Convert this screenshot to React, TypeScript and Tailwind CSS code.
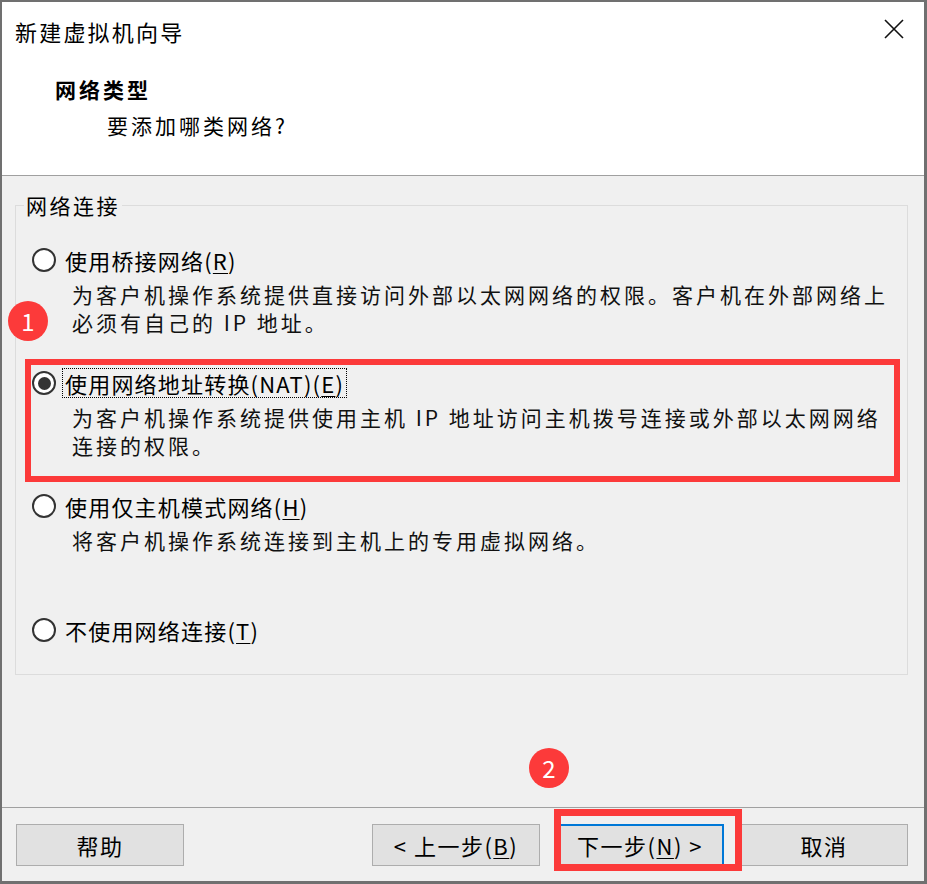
import React from 'react';

const font = { fontFamily: '"Noto Sans CJK SC", "Microsoft YaHei", sans-serif' };

type Opt = {
    label: string;
    key: string;
    desc: string[];
    checked?: boolean;
    focused?: boolean;
    marked?: boolean;
    extra?: string;
};

const Radio: React.FC<{ checked?: boolean }> = ({ checked }) => (
    <span className="w-[24px] h-[24px] rounded-full border-2 border-[#333] bg-white flex items-center justify-center shrink-0">
        {checked && <span className="w-[13px] h-[13px] rounded-full bg-[#333]"></span>}
    </span>
);

const Option: React.FC<{ opt: Opt }> = ({ opt }) => (
    <div
        className={
            'ml-[9px] w-[875px] border-[6px] pt-[3px] pb-[17px] ' +
            (opt.marked ? 'border-[#fc3a3a]' : 'border-transparent') +
            (opt.extra ? ' ' + opt.extra : '')
        }
    >
        <div className="flex items-center h-[30px] pl-[1px]">
            <Radio checked={opt.checked} />
            <span
                className={
                    'ml-[6px] px-[2px] h-[30px] flex items-center text-[22px] tracking-[1.2px] text-black ' +
                    (opt.focused ? 'border border-dotted border-black' : 'border border-transparent')
                }
            >
                {opt.label}(<span className="underline underline-offset-[3px] decoration-1">{opt.key}</span>)
            </span>
        </div>
        {opt.desc.length > 0 && (
            <div className="mt-[5px] pl-[41px] text-[21px] leading-[28px] tracking-[3px] text-[#111]">
                {opt.desc.map((d, i) => (
                    <div key={i}>{d}</div>
                ))}
            </div>
        )}
    </div>
);

const options: Opt[] = [
    {
        label: '使用桥接网络',
        key: 'R',
        desc: ['为客户机操作系统提供直接访问外部以太网网络的权限。客户机在外部网络上', '必须有自己的 IP 地址。'],
        extra: 'pb-[16px]',
    },
    {
        label: '使用网络地址转换(NAT)',
        key: 'E',
        desc: ['为客户机操作系统提供使用主机 IP 地址访问主机拨号连接或外部以太网网络', '连接的权限。'],
        checked: true,
        focused: true,
        marked: true,
    },
    {
        label: '使用仅主机模式网络',
        key: 'H',
        desc: ['将客户机操作系统连接到主机上的专用虚拟网络。'],
    },
    {
        label: '不使用网络连接',
        key: 'T',
        desc: [],
        extra: 'mt-[29px]',
    },
];

const Button: React.FC<{ children: React.ReactNode; primary?: boolean }> = ({ children, primary }) => (
    <div
        className={
            'w-[168px] h-[42px] flex items-center justify-center bg-[#e1e1e1] text-[22px] tracking-[1.5px] text-black ' +
            (primary ? 'border-2 border-[#0078d7]' : 'border border-[#adadad]')
        }
    >
        {children}
    </div>
);

export default function App() {
    return (
        <div
            className="relative w-[927px] h-[884px] border-l-2 border-t-2 border-r-[3px] border-b-[3px] border-[#707070] flex flex-col bg-[#f0f0f0]"
            style={font}
        >
            {/* cabeçalho branco */}
            <div className="h-[174px] bg-white border-b border-[#a0a0a0] relative">
                <div className="flex items-start justify-between pl-[13px] pr-[20px] pt-[14px]">
                    <span className="text-[22px] leading-[30px] tracking-[2.2px] text-black">新建虚拟机向导</span>
                    <svg width="20" height="20" viewBox="0 0 20 20" className="mt-[3px]">
                        <path d="M1 1 L19 19 M19 1 L1 19" stroke="#111" strokeWidth="1.6" />
                    </svg>
                </div>
                <div className="pl-[53px] mt-[28px] text-[21px] leading-[30px] font-bold tracking-[3px] text-black">网络类型</div>
                <div className="pl-[105px] mt-[6px] text-[21px] leading-[30px] tracking-[3px] text-black">要添加哪类网络?</div>
            </div>

            {/* corpo */}
            <div className="flex-1 relative">
                <fieldset className="ml-[13px] mt-[15px] w-[893px] border border-[#dcdcdc] pb-[6px]">
                    <legend className="ml-[8px] px-[2px] text-[21px] leading-[28px] tracking-[2.5px] text-black">网络连接</legend>
                    <div className="mt-[17px]">
                        {options.map((o) => (
                            <Option key={o.key} opt={o} />
                        ))}
                    </div>
                </fieldset>
                <div className="absolute left-[6px] top-[125px] w-[40px] h-[40px] rounded-full bg-[#fc3a3a] text-white text-[24px] flex items-center justify-center">
                    1
                </div>
                <div className="absolute left-[527px] top-[572px] w-[40px] h-[40px] rounded-full bg-[#fc3a3a] text-white text-[24px] flex items-center justify-center">
                    2
                </div>
            </div>

            {/* rodapé */}
            <div className="h-[74px] border-t border-[#a0a0a0] flex items-start pt-[16px] pl-[14px] relative">
                <Button>帮助</Button>
                <div className="flex-1"></div>
                <div className="flex gap-[16px] pr-[16px]">
                    <Button>&lt; 上一步(<span className="underline decoration-1 underline-offset-[3px]">B</span>)</Button>
                    <Button primary>下一步(<span className="underline decoration-1 underline-offset-[3px]">N</span>) &gt;</Button>
                    <Button>取消</Button>
                </div>
                <div className="absolute left-[552px] top-[1px] w-[188px] h-[62px] border-[7px] border-[#fc3a3a]"></div>
            </div>
        </div>
    );
}
